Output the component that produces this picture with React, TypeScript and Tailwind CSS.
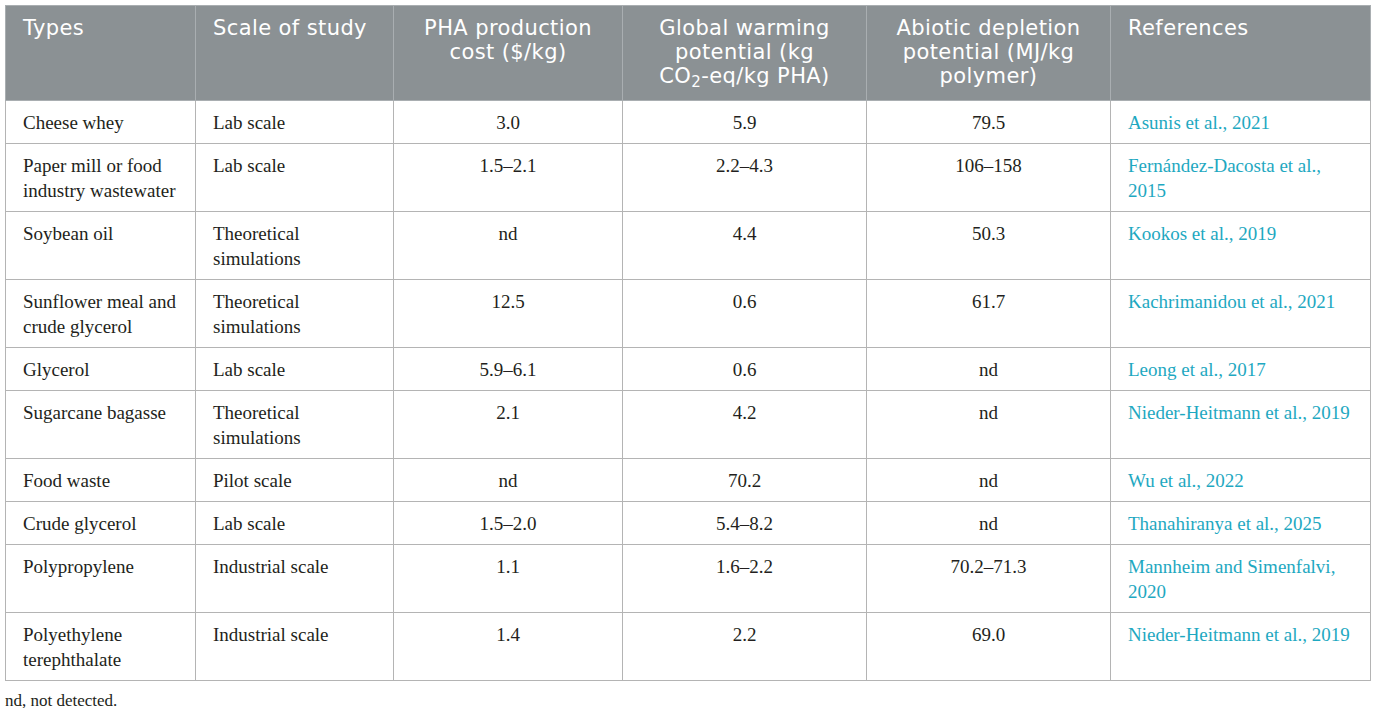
import React from "react";

const rows = [
  { type: "Cheese whey", scale: "Lab scale", cost: "3.0", gwp: "5.9", adp: "79.5", ref: "Asunis et al., 2021" },
  { type: "Paper mill or food industry wastewater", scale: "Lab scale", cost: "1.5–2.1", gwp: "2.2–4.3", adp: "106–158", ref: "Fernández-Dacosta et al., 2015" },
  { type: "Soybean oil", scale: "Theoretical simulations", cost: "nd", gwp: "4.4", adp: "50.3", ref: "Kookos et al., 2019" },
  { type: "Sunflower meal and crude glycerol", scale: "Theoretical simulations", cost: "12.5", gwp: "0.6", adp: "61.7", ref: "Kachrimanidou et al., 2021" },
  { type: "Glycerol", scale: "Lab scale", cost: "5.9–6.1", gwp: "0.6", adp: "nd", ref: "Leong et al., 2017" },
  { type: "Sugarcane bagasse", scale: "Theoretical simulations", cost: "2.1", gwp: "4.2", adp: "nd", ref: "Nieder-Heitmann et al., 2019" },
  { type: "Food waste", scale: "Pilot scale", cost: "nd", gwp: "70.2", adp: "nd", ref: "Wu et al., 2022" },
  { type: "Crude glycerol", scale: "Lab scale", cost: "1.5–2.0", gwp: "5.4–8.2", adp: "nd", ref: "Thanahiranya et al., 2025" },
  { type: "Polypropylene", scale: "Industrial scale", cost: "1.1", gwp: "1.6–2.2", adp: "70.2–71.3", ref: "Mannheim and Simenfalvi, 2020" },
  { type: "Polyethylene terephthalate", scale: "Industrial scale", cost: "1.4", gwp: "2.2", adp: "69.0", ref: "Nieder-Heitmann et al., 2019" },
];

const th = "border border-[#a9aeb1] px-[17px] pt-[10px] pb-[12px] align-top font-normal text-white";
const td = "border border-[#b4b4b4] px-[17px] pt-[9px] pb-[8px] align-top";

export default function App() {
  return (
    <div className="min-h-screen bg-white px-[5px] pt-[5px] font-['Liberation_Serif',serif] text-[#231f20]">
      <table className="w-[1365px] table-fixed border-collapse border border-[#b4b4b4]">
        <colgroup>
          <col className="w-[190px]" />
          <col className="w-[198px]" />
          <col className="w-[229px]" />
          <col className="w-[244px]" />
          <col className="w-[244px]" />
          <col className="w-[260px]" />
        </colgroup>
        <thead>
          <tr className="bg-[#8b9194] font-['DejaVu_Sans',sans-serif] text-[21px] leading-[24px] tracking-[0.4px]">
            <th className={`${th} text-left`}>Types</th>
            <th className={`${th} text-left`}>Scale of study</th>
            <th className={`${th} text-center`}>
              PHA production
              <br />
              cost ($/kg)
            </th>
            <th className={`${th} text-center`}>
              Global warming
              <br />
              potential (kg
              <br />
              CO<sub className="text-[15px] leading-none">2</sub>-eq/kg PHA)
            </th>
            <th className={`${th} text-center`}>
              Abiotic depletion
              <br />
              potential (MJ/kg
              <br />
              polymer)
            </th>
            <th className={`${th} text-left`}>References</th>
          </tr>
        </thead>
        <tbody className="text-[19px] leading-[25px]">
          {rows.map((r) => (
            <tr key={r.type}>
              <td className={td}>{r.type}</td>
              <td className={td}>{r.scale}</td>
              <td className={`${td} text-center`}>{r.cost}</td>
              <td className={`${td} text-center`}>{r.gwp}</td>
              <td className={`${td} text-center`}>{r.adp}</td>
              <td className={`${td} text-[#1ea8c1]`}>{r.ref}</td>
            </tr>
          ))}
        </tbody>
      </table>
      <p className="mt-[10px] text-[17px] leading-[20px]">nd, not detected.</p>
    </div>
  );
}
